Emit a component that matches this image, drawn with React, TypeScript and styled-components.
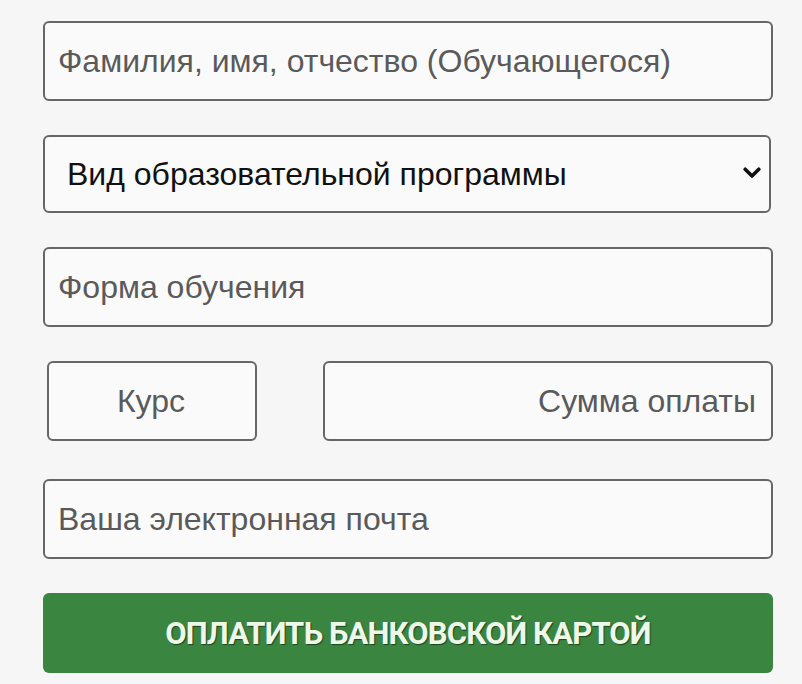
import React from "react";
import styled, { createGlobalStyle } from "styled-components";

const Global = createGlobalStyle`
  html, body {
    margin: 0;
    padding: 0;
    background: #f6f6f6;
  }
  * { box-sizing: border-box; }
`;

const Form = styled.form`
  width: 802px;
  padding: 21px 29px 11px 43px;
  display: flex;
  flex-direction: column;
  gap: 34px;
  font-family: "Liberation Sans", Arial, sans-serif;
`;

const Field = styled.input<{ $align?: "left" | "center" | "right" }>`
  display: block;
  width: 100%;
  height: 80px;
  margin: 0;
  padding: 0 15px 0 13px;
  border: 2px solid #666;
  border-radius: 6px;
  background: #fafafa;
  font-family: "Liberation Sans", Arial, sans-serif;
  font-size: 32px;
  color: #222;
  text-align: ${(p) => p.$align || "left"};
  outline: none;
  &::placeholder {
    color: #5a5a5a;
    opacity: 1;
  }
`;

const SelectWrap = styled.div`
  position: relative;
  width: 728px;
`;

const Select = styled.select`
  display: block;
  width: 100%;
  height: 78px;
  margin: 0;
  padding: 0 50px 0 22px;
  border: 2px solid #666;
  border-radius: 6px;
  background: #fafafa;
  appearance: none;
  font-family: "Liberation Sans", Arial, sans-serif;
  font-size: 32px;
  color: #111;
  outline: none;
`;

const Chevron = styled.svg`
  position: absolute;
  right: 10px;
  top: 32px;
  width: 18px;
  height: 12px;
  pointer-events: none;
`;

const Pair = styled.div`
  display: flex;
  gap: 66px;
  padding-left: 4px;
  margin-bottom: 4px;
`;

const Short = styled.div<{ $w: number }>`
  width: ${(p) => p.$w}px;
  flex: none;
`;

const PayButton = styled.button`
  display: block;
  width: 100%;
  height: 80px;
  margin: 0;
  border: none;
  border-radius: 6px;
  background: #3a853f;
  color: #eef8e8;
  font-family: Roboto, "Open Sans", sans-serif;
  font-weight: 700;
  font-size: 31px;
  letter-spacing: -0.85px;
  text-shadow: 1px 1px 1px #1d4420;
  cursor: pointer;
`;

export default function App() {
  return (
    <>
      <Global />
      <Form onSubmit={(e) => e.preventDefault()}>
        <Field placeholder="Фамилия, имя, отчество (Обучающегося)" />
        <SelectWrap>
          <Select defaultValue="">
            <option value="">Вид образовательной программы</option>
          </Select>
          <Chevron viewBox="0 0 18 12">
            <path
              d="M2.2 2.2 L9 9 L15.8 2.2"
              fill="none"
              stroke="#111"
              strokeWidth="3.6"
              strokeLinecap="round"
              strokeLinejoin="round"
            />
          </Chevron>
        </SelectWrap>
        <Field placeholder="Форма обучения" />
        <Pair>
          <Short $w={210}>
            <Field placeholder="Курс" $align="center" />
          </Short>
          <Short $w={450}>
            <Field placeholder="Сумма оплаты" $align="right" />
          </Short>
        </Pair>
        <Field placeholder="Ваша электронная почта" />
        <PayButton type="submit">ОПЛАТИТЬ БАНКОВСКОЙ КАРТОЙ</PayButton>
      </Form>
    </>
  );
}
